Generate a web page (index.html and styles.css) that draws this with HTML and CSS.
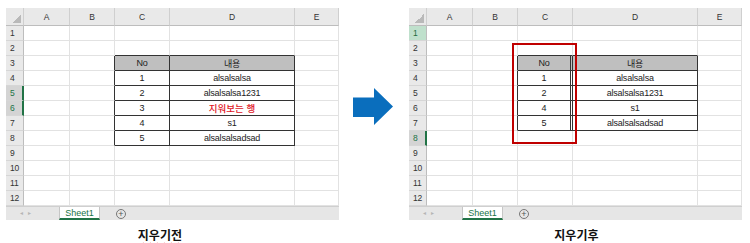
FILE: index.html
```html
<!DOCTYPE html>
<html lang="ko">
<head>
  <meta charset="UTF-8">
  <title>행 삭제 전후</title>
  <link rel="stylesheet" href="styles.css">
</head>
<body>

  <div class="page">
    <div class="panels">
      <!-- Before -->
      <div class="sheet">
        <div class="grid" id="before"></div>
        <div class="tabs">
          <div class="nav">◂ &nbsp; ▸</div>
          <div class="tab">Sheet1</div>
          <div class="add">+</div>
        </div>
      </div>

      <!-- Arrow -->
      <div class="arrow">
        <svg width="40" height="37" viewBox="0 0 40 37">
          <polygon points="0,9.5 21,9.5 21,0 40,18.5 21,37 21,29 0,29" fill="#0a6ebd"/>
        </svg>
      </div>

      <!-- After -->
      <div class="sheet">
        <div class="grid" id="after"></div>
        <div class="tabs">
          <div class="nav">◂ &nbsp; ▸</div>
          <div class="tab">Sheet1</div>
          <div class="add">+</div>
        </div>
        <div class="mark"></div>
      </div>
    </div>

    <div class="captions">
      <div class="caption caption-before"><span class="spell">지우기전</span></div>
      <div class="caption caption-after">지우기후</div>
    </div>
  </div>

  <script>
    const cols = ['A', 'B', 'C', 'D', 'E'];

    // rows 3.. of the table in C:D
    const beforeRows = [
      ['No', '내용'],
      ['1', 'alsalsalsa'],
      ['2', 'alsalsalsa1231'],
      ['3', '지워보는 행', 'red'],
      ['4', 's1'],
      ['5', 'alsalsalsadsad']
    ];
    const afterRows = [
      ['No', '내용'],
      ['1', 'alsalsalsa'],
      ['2', 'alsalsalsa1231'],
      ['4', 's1'],
      ['5', 'alsalsalsadsad']
    ];

    function cell(cls, text) {
      const div = document.createElement('div');
      div.className = 'cell ' + cls;
      if (text) div.textContent = text;
      return div;
    }

    function buildSheet(el, rows, opts) {
      el.appendChild(cell('hd corner'));
      cols.forEach(c => el.appendChild(cell('hd', c)));

      const first = 3, last = 3 + rows.length - 1;

      for (let r = 1; r <= 12; r++) {
        let rh = 'rh';
        if (opts.sel.includes(r)) rh += ' sel';
        if (opts.act === r) rh += ' act';
        el.appendChild(cell(rh, String(r)));

        const inTable = r >= first && r <= last;
        const row = inTable ? rows[r - first] : null;

        cols.forEach(c => {
          let cls = '';
          let text = '';
          if (inTable && (c === 'C' || c === 'D')) {
            cls = 't';
            if (r === first) cls += ' th';
            if (c === 'C' && opts.double) cls += ' dbl';
            text = row[c === 'C' ? 0 : 1];
            if (c === 'D' && row[2] === 'red') cls += ' red';
          } else {
            if (inTable && c === 'B') cls = 'edge-r';
            if (r === first - 1 && (c === 'C' || c === 'D')) cls = 'edge-b';
          }
          el.appendChild(cell(cls, text));
        });
      }
    }

    buildSheet(document.getElementById('before'), beforeRows, { sel: [5, 6] });
    buildSheet(document.getElementById('after'), afterRows, { sel: [8], act: 1, double: true });
  </script>

</body>
</html>
```

FILE: styles.css
```css
/* Reset */
* {
  margin: 0;
  padding: 0;
  box-sizing: border-box;
}

body {
  background: #ffffff;
  font-family: 'Liberation Sans', 'Noto Sans CJK KR', sans-serif;
  color: #222;
}

.page {
  width: 750px;
  height: 243px;
  padding-top: 8px;
}

/* Two sheets with the arrow between */
.panels {
  display: flex;
  padding-left: 6px;
}

.sheet {
  position: relative;
  width: 333px;
}

.arrow {
  width: 70px;
  padding: 80px 0 0 14px;
}

/* Spreadsheet grid */
.grid {
  display: grid;
  grid-template-columns: 18px 46px 45px 55px 125px 44px;
  grid-template-rows: 18px repeat(12, 15px);
}

.cell {
  display: flex;
  align-items: center;
  justify-content: center;
  border-right: 1px solid #e2e2e2;
  border-bottom: 1px solid #e2e2e2;
  font-size: 9px;
  letter-spacing: -0.2px;
  white-space: nowrap;
  overflow: hidden;
}

/* Column and row headers */
.hd {
  background: #e9e9e9;
  border-right-color: #cfcfcf;
  border-bottom-color: #bdbdbd;
  color: #333;
  font-size: 8.5px;
  padding-top: 1px;
}

.corner {
  background: linear-gradient(135deg, #e9e9e9 50%, #b9b9b9 50%) no-repeat;
  background-size: 9px 9px;
  background-position: right 2px bottom 2px;
  background-color: #e9e9e9;
}

.rh {
  justify-content: flex-start;
  padding-left: 4px;
  background: #e9e9e9;
  border-right-color: #bdbdbd;
  border-bottom-color: #d6d6d6;
  color: #333;
  font-size: 8.5px;
}

.rh.sel {
  background: #d4d4d4;
  border-right: 2px solid #217346;
  color: #217346;
}

.rh.act {
  background: #bfe0cc;
  color: #1d6b3f;
}

/* Table inside the sheet */
.t {
  border-right-color: #333;
  border-bottom-color: #333;
}

.th {
  background: #bfbfbf;
}

.dbl {
  border-right: 3px double #333;
}

.red {
  color: #e0141e;
  font-size: 9.5px;
  font-weight: 500;
  letter-spacing: 0;
}

.edge-r {
  border-right-color: #333;
}

.edge-b {
  border-bottom-color: #333;
}

/* Deleted-row highlight */
.mark {
  position: absolute;
  left: 103px;
  top: 35px;
  width: 65px;
  height: 101px;
  border: 2px solid #c00000;
}

/* Sheet tabs */
.tabs {
  display: flex;
  align-items: stretch;
  height: 14px;
  background: #e6e6e6;
  border-top: 1px solid #cfcfcf;
}

.nav {
  width: 53px;
  padding-left: 14px;
  font-size: 6px;
  line-height: 13px;
  color: #b5b5b5;
}

.tab {
  width: 41px;
  background: #ffffff;
  border-left: 1px solid #c6c6c6;
  border-right: 1px solid #c6c6c6;
  border-bottom: 2px solid #217346;
  color: #217346;
  font-size: 9px;
  text-align: center;
  line-height: 12px;
}

.add {
  width: 10px;
  height: 10px;
  margin: 2px 0 0 16px;
  border: 1px solid #777;
  border-radius: 50%;
  font-size: 9px;
  line-height: 8px;
  text-align: center;
  color: #555;
}

/* Captions */
.captions {
  display: flex;
  margin-top: 6px;
}

.caption {
  font-family: 'Noto Sans CJK KR', sans-serif;
  font-size: 12px;
  font-weight: 700;
  color: #111;
  text-align: center;
}

.caption-before {
  width: 326px;
}

.caption-after {
  width: 354px;
  margin-left: 83px;
}

.spell {
  text-decoration: underline wavy #e02020;
  text-decoration-thickness: 1px;
  text-underline-offset: 2px;
}
```
